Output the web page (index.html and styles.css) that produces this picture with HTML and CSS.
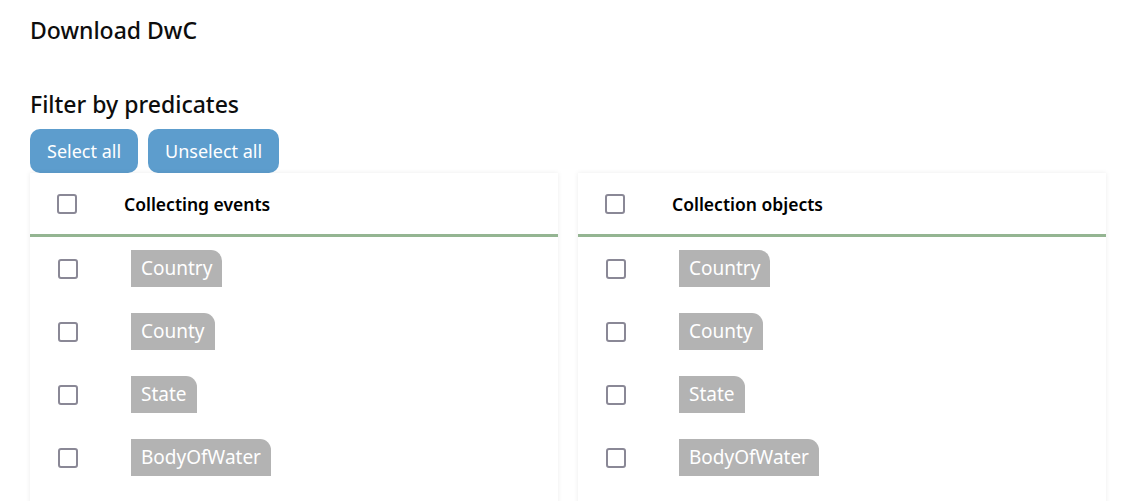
FILE: index.html
```html
<!DOCTYPE html>
<html>
<head>
<meta charset="utf-8">
<link rel="stylesheet" href="styles.css">
</head>
<body>
<div class="page">
  <h1 class="title">Download DwC</h1>
  <h2 class="subtitle">Filter by predicates</h2>
  <div class="actions">
    <button class="btn">Select all</button>
    <button class="btn">Unselect all</button>
  </div>
  <div class="cards">
    <div class="card">
      <div class="card-head">
        <span class="check head-check"></span>
        <span class="head-label">Collecting events</span>
      </div>
      <div class="row"><span class="check"></span><span class="tag">Country</span></div>
      <div class="row"><span class="check"></span><span class="tag">County</span></div>
      <div class="row"><span class="check"></span><span class="tag">State</span></div>
      <div class="row"><span class="check"></span><span class="tag">BodyOfWater</span></div>
    </div>
    <div class="card">
      <div class="card-head">
        <span class="check head-check"></span>
        <span class="head-label">Collection objects</span>
      </div>
      <div class="row"><span class="check"></span><span class="tag">Country</span></div>
      <div class="row"><span class="check"></span><span class="tag">County</span></div>
      <div class="row"><span class="check"></span><span class="tag">State</span></div>
      <div class="row"><span class="check"></span><span class="tag">BodyOfWater</span></div>
    </div>
  </div>
</div>
</body>
</html>
```
FILE: styles.css
```css
html, body {
  margin: 0;
  padding: 0;
  background: #ffffff;
  font-family: "Noto Sans", "Open Sans", sans-serif;
  color: #111;
  overflow: hidden;
}
.page {
  width: 1076px;
  padding: 0 0 0 30px;
}
.title {
  margin: 0;
  padding-top: 14px;
  height: 32px;
  line-height: 32px;
  font-size: 23px;
  font-weight: 500;
  color: #0d0d0d;
}
.subtitle {
  margin: 0;
  margin-top: 42px;
  height: 32px;
  line-height: 32px;
  font-size: 23px;
  font-weight: 500;
  color: #0d0d0d;
}
.actions {
  display: flex;
  gap: 10px;
  margin-top: 9px;
}
.btn {
  height: 44px;
  padding: 0 17px;
  border: none;
  border-radius: 10px;
  background: #5d9dcd;
  color: #fff;
  font-family: inherit;
  font-size: 18px;
}
.cards {
  display: flex;
  gap: 20px;
}
.card {
  width: 528px;
  height: 340px;
  background: #fff;
  box-shadow: 0 0 5px rgba(0, 0, 0, 0.08);
}
.card-head {
  height: 61px;
  border-bottom: 3px solid #94b592;
  display: flex;
  align-items: center;
}
.check {
  box-sizing: border-box;
  width: 20px;
  height: 20px;
  border: 2.5px solid #8a8896;
  border-radius: 3px;
  flex: none;
}
.head-check {
  margin-left: 27px;
  margin-top: 1px;
}
.head-label {
  margin-left: 47px;
  font-size: 17.5px;
  font-weight: 600;
  color: #000;
}
.row {
  height: 63px;
  display: flex;
  align-items: center;
}
.row .check {
  margin-left: 28px;
}
.tag {
  margin-left: 53px;
  height: 37px;
  line-height: 37px;
  padding: 0 10px;
  background: #b3b3b3;
  color: #fff;
  font-size: 19px;
  border-radius: 0 11px 0 0;
}
```
